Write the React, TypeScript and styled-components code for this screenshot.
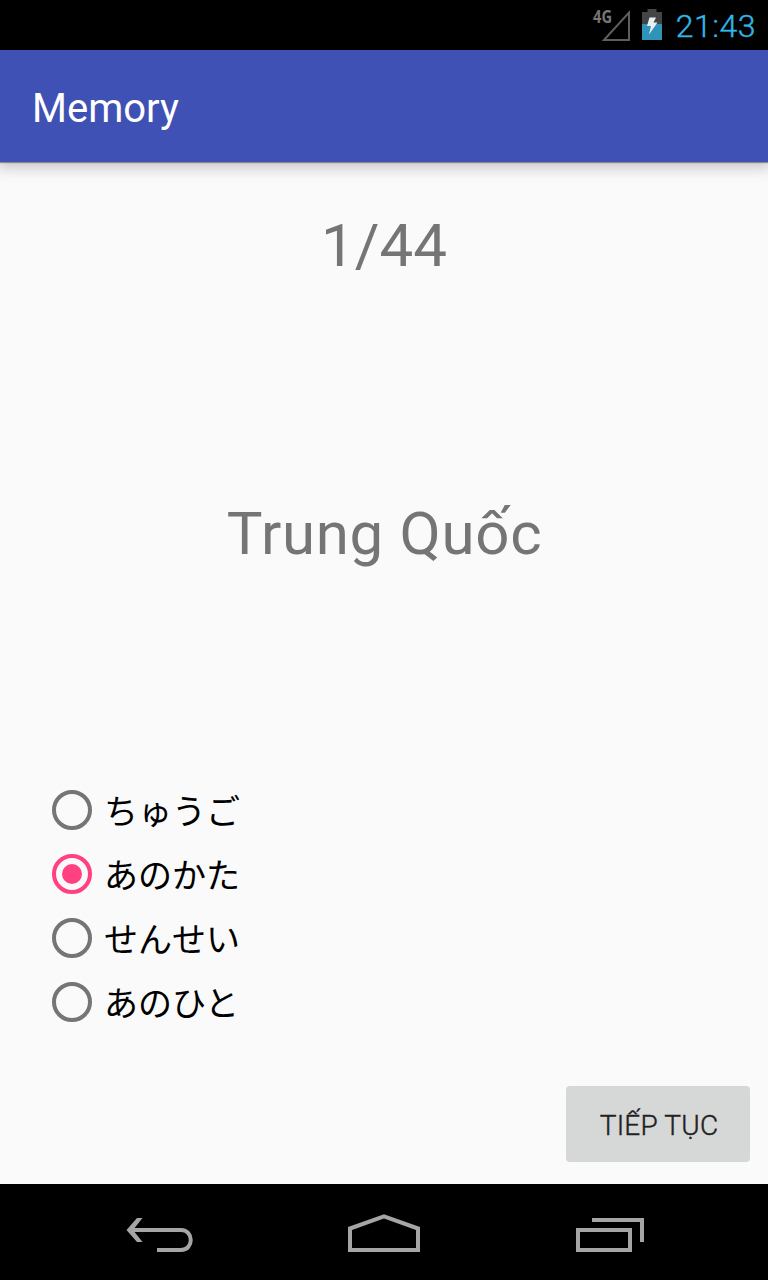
import { useState } from 'react'
import styled, { createGlobalStyle } from 'styled-components'

const answers = ['ちゅうご', 'あのかた', 'せんせい', 'あのひと']

const App = () => {
  const [selected, setSelected] = useState(1)

  return (
    <>
      <GlobalStyle />
      <StyledScreen>
        <StyledStatusBar>
          <StyledSignal width="38" height="46" viewBox="0 -6 38 46">
            <text x="1" y="15" textLength="19" lengthAdjust="spacingAndGlyphs">
              4G
            </text>
            <path d="M12 32L37 4.5V32Z" />
          </StyledSignal>
          <StyledBattery width="20" height="31" viewBox="0 0 20 31">
            <path d="M5.5 0H14.5V3H20V15H0V3H5.5Z" fill="#444" />
            <path d="M0 15H20V31H0Z" fill="#3093b8" />
            <path d="M7.5 8.5H14L11.5 13.5H15.5L7 25.5L9 17H5Z" fill="#e8f0f2" />
          </StyledBattery>
          <StyledClock>21:43</StyledClock>
        </StyledStatusBar>
        <StyledAppBar>
          <StyledTitle>Memory</StyledTitle>
        </StyledAppBar>
        <StyledContent>
          <StyledCounter>1/44</StyledCounter>
          <StyledWord>Trung Quốc</StyledWord>
          <StyledAnswers>
            {answers.map((answer, index) => (
              <StyledAnswer key={answer} onClick={() => setSelected(index)}>
                <StyledRadio $checked={selected === index} />
                <StyledAnswerText>{answer}</StyledAnswerText>
              </StyledAnswer>
            ))}
          </StyledAnswers>
          <StyledNextButton>TIẾP TỤC</StyledNextButton>
        </StyledContent>
        <StyledNavBar>
          <StyledNavIcon viewBox="0 0 80 48">
            <path
              d="M21 12H26.5L17 24L26.5 36H21L10.5 24Z"
              fill="#a5a5a5"
              stroke="none"
            />
            <path d="M14 24H65C78 24 78 44 65 44H41" />
          </StyledNavIcon>
          <StyledNavIcon viewBox="0 0 80 48">
            <path d="M6 44V22.5L40 10.3L74 22.5V44Z" />
          </StyledNavIcon>
          <StyledNavIcon viewBox="0 0 80 48">
            <path d="M6 24H58V44H6ZM20 14H70V36" />
          </StyledNavIcon>
        </StyledNavBar>
      </StyledScreen>
    </>
  )
}

export default App

const GlobalStyle = createGlobalStyle`
  body {
    margin: 0;
    background: #000;
    font-family: Roboto, 'Noto Sans CJK JP', sans-serif;
  }
`

const StyledScreen = styled.div`
  width: 768px;
  height: 1280px;
  display: flex;
  flex-direction: column;
  overflow: hidden;
  background: #fafafa;
`

const StyledStatusBar = styled.header`
  box-sizing: border-box;
  height: 50px;
  padding-right: 12px;
  display: flex;
  align-items: center;
  justify-content: flex-end;
  background: #000;
`

const StyledSignal = styled.svg`
  margin-right: 12px;

  text {
    fill: #777;
    font-family: 'Open Sans', sans-serif;
    font-size: 17.5px;
    font-weight: 700;
  }

  path {
    fill: none;
    stroke: #5e5e5e;
    stroke-width: 2;
  }
`

const StyledBattery = styled.svg`
  margin: 0 14px 2px 0;
`

const StyledClock = styled.span`
  padding-top: 1px;
  font-size: 32px;
  font-weight: 300;
  line-height: 50px;
  letter-spacing: 0.5px;
  color: #33b5e5;
  -webkit-text-stroke: 0.4px #33b5e5;
`

const StyledAppBar = styled.div`
  height: 112px;
  flex-shrink: 0;
  display: flex;
  align-items: center;
  padding-left: 32px;
  background: #3f51b5;
  box-shadow:
    0 1px 1px rgba(0, 0, 0, 0.35),
    0 2px 14px 4px rgba(0, 0, 0, 0.2);
  /* keeps the shadow off the status bar */
  clip-path: inset(0 0 -24px 0);
`

const StyledTitle = styled.h1`
  margin: 6px 0 0;
  font-size: 40px;
  font-weight: 400;
  line-height: 48px;
  color: #fff;
`

const StyledContent = styled.main`
  flex: 1;
  display: flex;
  flex-direction: column;
  color: #757575;
`

const StyledCounter = styled.div`
  padding-top: 49px;
  font-size: 60px;
  line-height: 70px;
  text-align: center;
`

const StyledWord = styled.div`
  box-sizing: border-box;
  height: 497px;
  padding: 8px 0 0 1px;
  display: flex;
  align-items: center;
  justify-content: center;
  font-size: 60px;
  line-height: 70px;
  letter-spacing: 0.7px;
`

const StyledAnswers = styled.div`
  display: flex;
  flex-direction: column;
  padding-left: 52px;
`

const StyledAnswer = styled.label`
  height: 64px;
  display: flex;
  align-items: center;
  cursor: pointer;
`

const StyledRadio = styled.span<{ $checked: boolean }>`
  box-sizing: border-box;
  width: 40px;
  height: 40px;
  display: flex;
  align-items: center;
  justify-content: center;
  border: 4px solid ${({ $checked }) => ($checked ? '#ff4081' : '#757575')};
  border-radius: 50%;

  &::after {
    content: '';
    width: 20px;
    height: 20px;
    border-radius: 50%;
    background: ${({ $checked }) => ($checked ? '#ff4081' : 'transparent')};
  }
`

const StyledAnswerText = styled.span`
  margin-left: 12px;
  font-family: 'Noto Sans CJK JP', sans-serif;
  font-size: 34px;
  line-height: 64px;
  color: #000;
`

const StyledNextButton = styled.button`
  align-self: flex-end;
  width: 184px;
  height: 76px;
  margin: 52px 18px 0 0;
  padding: 2px 0 0 2px;
  border: 0;
  border-radius: 4px;
  background: #d6d7d7;
  color: #212121;
  font-family: Roboto, sans-serif;
  font-size: 28px;
  font-weight: 300;
  letter-spacing: 0.2px;
  -webkit-text-stroke: 0.4px #212121;
  cursor: pointer;
`

const StyledNavBar = styled.nav`
  height: 96px;
  flex-shrink: 0;
  display: flex;
  justify-content: center;
  gap: 148px;
  background: #000;
`

const StyledNavIcon = styled.svg`
  width: 80px;
  height: 48px;
  margin-top: 22px;
  fill: none;
  stroke: #a5a5a5;
  stroke-width: 4;
`
